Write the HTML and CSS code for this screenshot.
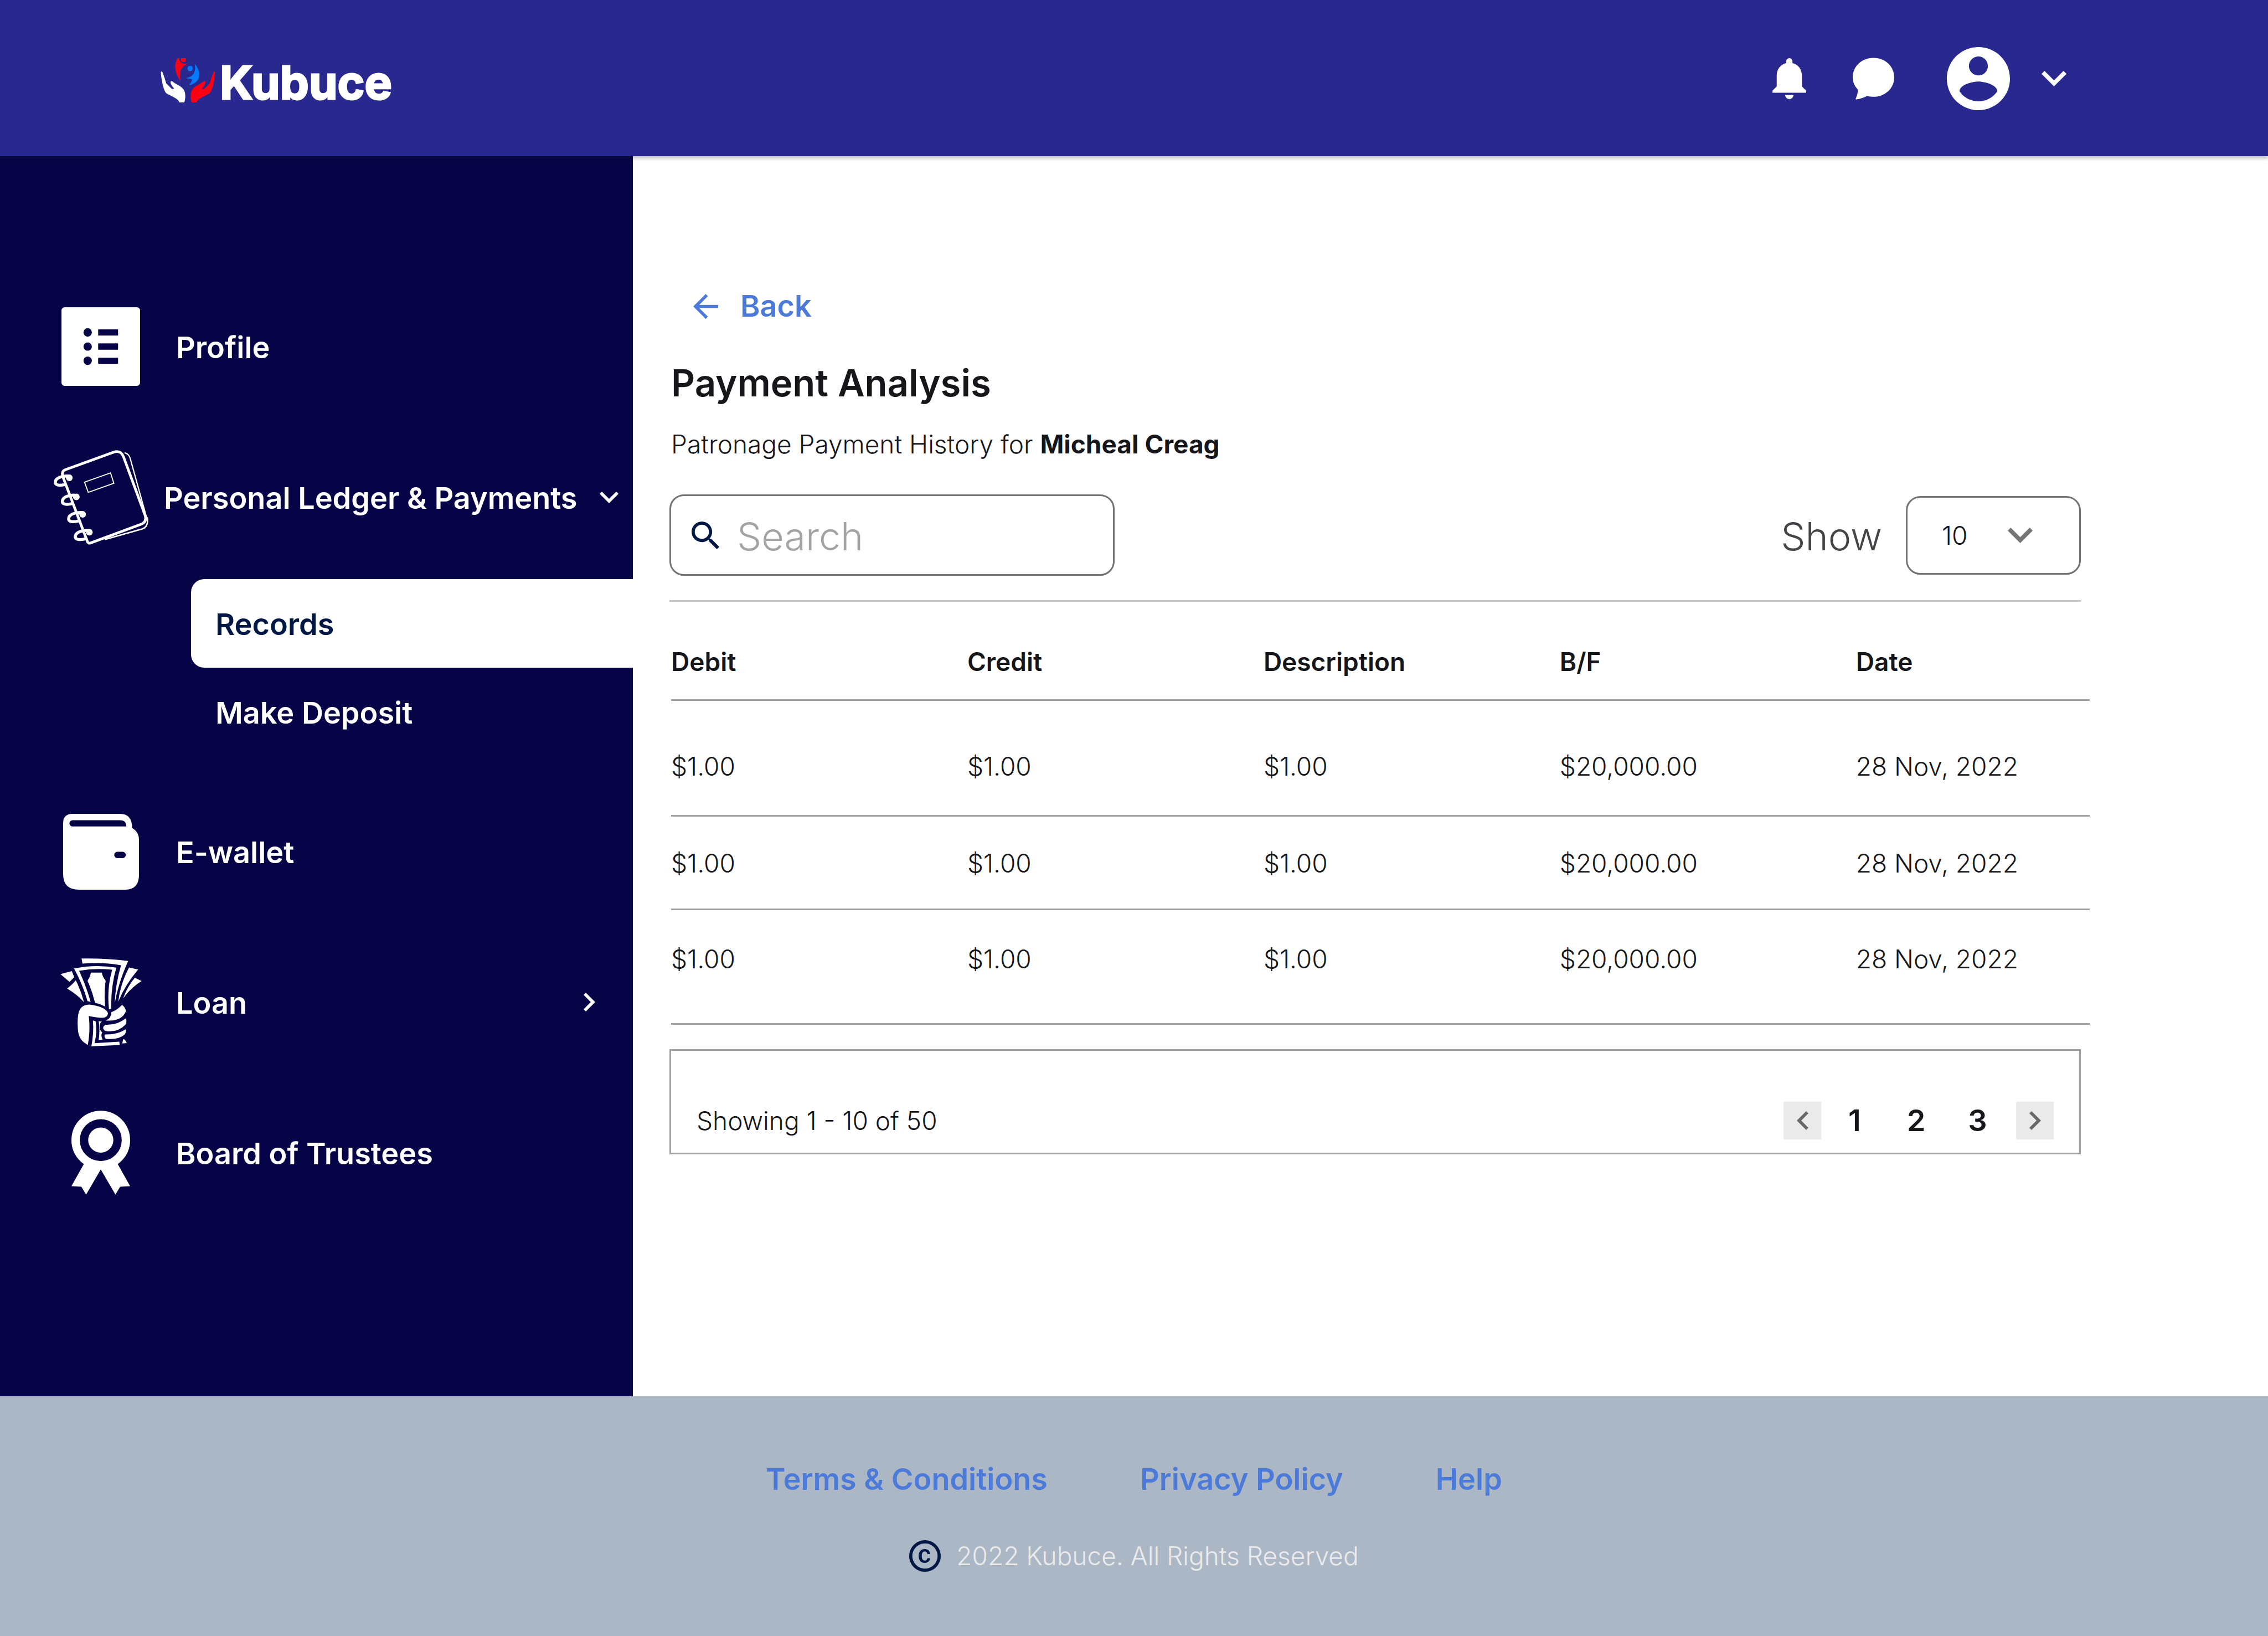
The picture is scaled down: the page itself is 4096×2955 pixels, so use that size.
FILE: index.html
```html
<!DOCTYPE html>
<html lang="en">
<head>
<meta charset="utf-8">
<title>Kubuce - Payment Analysis</title>
<meta name="viewport" content="width=device-width, initial-scale=1">
<link rel="stylesheet" href="styles.css">
</head>
<body>
<svg class="sprite" aria-hidden="true">
  <symbol id="chevron-down" viewBox="6 8.59 12 7.41"><path d="M16.59 8.59L12 13.17 7.41 8.59 6 10l6 6 6-6z"/></symbol>
  <symbol id="chevron-right" viewBox="8.59 6 7.41 12"><path d="M10 6L8.59 7.41 13.17 12l-4.58 4.59L10 18l6-6z"/></symbol>
  <symbol id="chevron-left" viewBox="8 6 7.41 12"><path d="M14 6l1.41 1.41L10.83 12l4.58 4.59L14 18l-6-6z"/></symbol>
</svg>

<header class="topbar">
  <a class="brand" href="#">
    <svg class="brand-mark" viewBox="78 93 312 252" aria-hidden="true">
      <path fill="#fff" d="M80 171c2-4 7-3 9 3 8 20 14 38 21 62l30 30c6 5 11 4 15 1-5-9-22-24-20-39 2-7 8-5 12-1 15 14 44 20 64 47 11 20 9 50 2 71h-28c-5-19-35-30-72-50-19-14-33-90-33-124z"/>
      <path fill="#fe0013" d="M388 171c-2-4-7-3-9 3-8 20-14 38-21 62l-30 30c-6 5-11 4-15 1 5-9 22-24 20-39-2-7-8-5-12-1-15 14-44 20-64 47-11 20-9 50-2 71h28c5-19 35-30 72-50 19-14 33-90 33-124z"/>
      <path fill="#fe0013" d="M175 93h10c-2 17 11 29 26 32h20c-33 16-51 38-39 101-21-36-47-84-17-133z"/>
      <circle fill="#fe0013" cx="208" cy="101" r="15"/>
      <circle fill="#047bfe" cx="246" cy="152" r="15"/>
      <path fill="#047bfe" d="M272 126c44 47 34 108-31 121 7-10 14-19 17-33-12-6-22-2-34-8 36-6 58-28 48-80z"/>
    </svg>
    <span class="brand-name">Kubuce</span>
  </a>
  <div class="topbar-actions">
    <button class="icon-button" type="button" aria-label="Notifications">
      <svg class="bell" viewBox="0 0 64 78"><path d="M26 9.500V6a6 6 0 0 1 12 0v3.500C49 12 56 21 56 34v20l8 8v4H0v-4l8-8V34C8 21 15 12 26 9.500zM24 70h16a8 8 0 0 1-16 0z"/></svg>
    </button>
    <button class="icon-button chat-button" type="button" aria-label="Messages">
      <svg class="chat" viewBox="0 0 80 80"><path d="M40 0c22 0 40 16 40 37.500S62 75 40 75c-4 0-8-.5-12-1.700C21 77 14 79 7 80c-1.500 0-1.500-1-1-2 2-5 4-10 4-17C4 55 0 47 0 37.500 0 16 18 0 40 0z"/></svg>
    </button>
    <button class="icon-button account" type="button" aria-label="Account menu">
      <svg class="avatar" viewBox="2 2 20 20"><path d="M12 2C6.480 2 2 6.480 2 12s4.480 10 10 10 10-4.480 10-10S17.520 2 12 2zm0 3c1.660 0 3 1.340 3 3s-1.340 3-3 3-3-1.340-3-3 1.340-3 3-3zm0 14.200c-2.500 0-4.710-1.280-6-3.220.03-1.990 4-3.080 6-3.080 1.990 0 5.970 1.090 6 3.080-1.290 1.940-3.500 3.220-6 3.220z"/></svg>
      <svg class="caret"><use href="#chevron-down"/></svg>
    </button>
  </div>
</header>

<div class="layout">
  <nav class="sidebar" aria-label="Main">
    <ul class="menu">
      <li>
        <a class="menu-item" href="#">
          <span class="menu-icon"><svg class="icon-profile" viewBox="0 0 150 150"><rect width="150" height="150" rx="6" fill="#fff"/><g fill="#060446"><circle cx="50" cy="48" r="8"/><circle cx="50" cy="75" r="8"/><circle cx="50" cy="102" r="8"/><rect x="70" y="42" width="38" height="12" rx="1"/><rect x="70" y="69" width="38" height="12" rx="1"/><rect x="70" y="96" width="38" height="12" rx="1"/></g></svg></span>
          <span class="menu-label">Profile</span>
        </a>
      </li>
      <li>
        <a class="menu-item ledger" href="#">
          <span class="menu-icon"><svg class="icon-ledger" viewBox="36 54 540 540">
            <path stroke-width="15" d="M229 578L88 205Q78 174 104 165L380 65Q420 54 434 92L558 428Q567 464 536 476L246 584Q233 589 228 574"/>
            <path stroke-width="7" d="M443 70Q466 76 473 104L566 440"/>
            <path stroke-width="8" d="M570 440Q578 492 540 504L330 563"/>
            <path stroke-width="6" stroke-linejoin="miter" d="M212 237L360 184L379 243L233 295z"/>
            <g id="ring"><circle cx="125" cy="212" r="19" fill="#fff" stroke="none"/><path stroke-width="17" d="M118 202C85 200 45 212 45 238C45 256 72 257 98 251"/></g>
            <use href="#ring" x="40" y="109"/><use href="#ring" x="76" y="208"/><use href="#ring" x="114" y="310"/>
          </svg></span>
          <span class="menu-label">Personal Ledger &amp; Payments</span>
          <svg class="menu-caret-down"><use href="#chevron-down"/></svg>
        </a>
        <ul class="submenu">
          <li><a class="submenu-item active" href="#" aria-current="page">Records</a></li>
          <li><a class="submenu-item" href="#">Make Deposit</a></li>
        </ul>
      </li>
      <li>
        <a class="menu-item" href="#">
          <span class="menu-icon"><svg class="icon-wallet" viewBox="0 0 144 144"><path fill-rule="evenodd" d="M18 0H108Q131 0 131 27Q144 34 144 50V116Q144 144 118 144H30Q0 144 0 114V18Q0 0 18 0zM18 12a6 6 0 0 0 0 12H120Q120 12 108 12zM103 72a6 6 0 0 0 0 12h10a6 6 0 0 0 0-12z"/></svg></span>
          <span class="menu-label">E-wallet</span>
        </a>
      </li>
      <li>
        <a class="menu-item" href="#">
          <span class="menu-icon"><svg class="icon-loan" viewBox="43 42 465 504">
            <path d="M164 43Q300 40 431 57Q375 180 354 298Q358 190 390 82Q290 62 169 72z"/>
            <path d="M436 94L488 106Q415 190 374 290Q385 190 436 94z"/>
            <path d="M469 153L508 172Q445 210 402 272Q425 205 469 153z"/>
            <path d="M43 132L108 115L122 150L95 177z"/>
            <path d="M131 168Q160 225 178 293Q140 250 81 215Q108 195 131 168z"/>
            <path d="M121 100Q240 75 363 95Q330 210 334 331L321 334Q308 215 339 107Q240 97 150 113Q190 200 216 291L198 287Q170 190 121 100z"/>
            <path d="M217 124H280Q282 145 302 170Q292 240 299 318Q270 302 241 296Q225 230 198 170Q215 145 217 124z"/>
            <path d="M205 307C260 310 315 335 315 358C310 387 280 388 205 372C212 430 210 480 200 537C160 515 143 490 142 430C140 350 150 312 205 307z"/>
            <path d="M396 308Q415 322 418 345Q395 405 302 398Q335 385 334 350Q365 340 396 308z"/>
            <path d="M417 385Q425 400 417 420Q370 470 300 457Q275 440 300 422Q370 425 417 385z"/>
            <path d="M417 448Q420 465 412 477Q375 510 303 503Q290 490 298 478Q370 480 417 448z"/>
            <path d="M229 398L244 402Q255 460 238 528L380 519L382 538L220 546Q235 470 229 398z"/>
            <path d="M262 402L280 404Q265 415 268 435Q268 455 282 465Q272 485 285 507L262 510Q270 450 262 402z"/>
            <path d="M402 505L412 508L423 527L397 529z"/>
          </svg></span>
          <span class="menu-label">Loan</span>
          <svg class="menu-caret-right"><use href="#chevron-right"/></svg>
        </a>
      </li>
      <li>
        <a class="menu-item" href="#">
          <span class="menu-icon"><svg class="icon-trustees" viewBox="0 0 112 160"><circle cx="56" cy="56" r="48" fill="none" stroke="#fff" stroke-width="16"/><circle cx="56" cy="56" r="24"/><path d="M24 101L0 144 19 145 28 160 56 112 84 160 93 145 112 144 88 101Q56 112 24 101z"/></svg></span>
          <span class="menu-label">Board of Trustees</span>
        </a>
      </li>
    </ul>
  </nav>

  <main class="content">
    <a class="back" href="#">
      <svg class="back-arrow" viewBox="4 4 16 16"><path d="M20 11H7.830l5.590-5.590L12 4l-8 8 8 8 1.410-1.410L7.830 13H20v-2z"/></svg>
      Back
    </a>
    <h1 class="title">Payment Analysis</h1>
    <p class="subtitle">Patronage Payment History for <strong>Micheal Creag</strong></p>

    <div class="toolbar">
      <label class="search">
        <svg class="search-icon" viewBox="3 3 17.490 17.490" aria-hidden="true"><path d="M15.500 14h-.79l-.28-.27C15.410 12.590 16 11.110 16 9.500 16 5.910 13.090 3 9.500 3S3 5.910 3 9.500 5.910 16 9.500 16c1.610 0 3.090-.59 4.230-1.570l.27.28v.79l5 4.990L20.490 19l-4.990-5zm-6 0C7.010 14 5 11.990 5 9.500S7.010 5 9.500 5 14 7.010 14 9.500 11.990 14 9.500 14z"/></svg>
        <input class="search-input" type="search" placeholder="Search" aria-label="Search">
      </label>
      <div class="page-size">
        <label class="page-size-label" for="page-size">Show</label>
        <div class="select">
          <select id="page-size" class="select-input"><option>10</option><option>25</option><option>50</option></select>
          <svg class="select-caret"><use href="#chevron-down"/></svg>
        </div>
      </div>
    </div>

    <table class="records">
      <colgroup><col class="col"><col class="col"><col class="col"><col class="col"><col></colgroup>
      <thead>
        <tr><th scope="col">Debit</th><th scope="col">Credit</th><th scope="col">Description</th><th scope="col">B/F</th><th scope="col">Date</th></tr>
      </thead>
      <tbody>
        <tr><td>$1.00</td><td>$1.00</td><td>$1.00</td><td>$20,000.00</td><td>28 Nov, 2022</td></tr>
        <tr><td>$1.00</td><td>$1.00</td><td>$1.00</td><td>$20,000.00</td><td>28 Nov, 2022</td></tr>
        <tr><td>$1.00</td><td>$1.00</td><td>$1.00</td><td>$20,000.00</td><td>28 Nov, 2022</td></tr>
      </tbody>
    </table>

    <div class="pagination">
      <p class="range">Showing 1 - 10 of 50</p>
      <nav class="pages" aria-label="Pages">
        <button class="step" type="button" aria-label="Previous page"><svg><use href="#chevron-left"/></svg></button>
        <a class="page" href="#">1</a>
        <a class="page" href="#">2</a>
        <a class="page" href="#">3</a>
        <button class="step" type="button" aria-label="Next page"><svg><use href="#chevron-right"/></svg></button>
      </nav>
    </div>
  </main>
</div>

<footer class="footer">
  <nav class="footer-links" aria-label="Footer">
    <a href="#">Terms &amp; Conditions</a>
    <a href="#">Privacy Policy</a>
    <a href="#">Help</a>
  </nav>
  <p class="copyright">
    <svg class="copyright-icon" viewBox="2 2 20 20" aria-hidden="true"><path d="M10.080 10.860c.05-.33.16-.62.3-.87s.34-.46.59-.62c.24-.15.54-.22.91-.23.23.01.44.05.63.13.2.09.38.21.52.36s.25.33.34.53.13.42.14.64h1.790c-.02-.47-.11-.9-.28-1.290s-.4-.73-.7-1.010-.66-.5-1.080-.66-.88-.23-1.390-.23c-.65 0-1.220.11-1.700.34s-.88.53-1.200.92-.56.84-.71 1.360S8 11.290 8 11.870v.27c0 .58.08 1.120.23 1.640s.39.97.71 1.350.72.69 1.200.91 1.050.34 1.700.34c.47 0 .91-.08 1.320-.23s.77-.36 1.080-.63.56-.58.74-.94.29-.74.3-1.150h-1.790c-.01.21-.06.4-.15.58s-.21.33-.36.46-.32.23-.52.3c-.19.07-.39.09-.6.1-.36-.01-.66-.08-.89-.23-.25-.16-.45-.37-.59-.62s-.25-.55-.3-.88-.08-.67-.08-1v-.27c0-.35.03-.68.08-1.010zM12 2C6.480 2 2 6.480 2 12s4.480 10 10 10 10-4.480 10-10S17.520 2 12 2zm0 18c-4.410 0-8-3.590-8-8s3.590-8 8-8 8 3.590 8 8-3.590 8-8 8z"/></svg>
    2022 Kubuce. All Rights Reserved
  </p>
</footer>
</body>
</html>
```
FILE: styles.css
```css
:root {
  --indigo: #29288e;
  --navy: #060446;
  --ink: #16171b;
  --deep: #001845;
  --blue: #4c7ad8;
  --line: #a0a1a4;
  --text-sm: 46px;
  --text-md: 54px;
  --text-lg: 70px;
}

*, *::before, *::after { box-sizing: border-box; }

body {
  margin: 0;
  min-height: 100vh;
  display: flex;
  flex-direction: column;
  background: #fff;
  color: var(--ink);
  font-family: "Inter", "Liberation Sans", sans-serif;
  font-size: var(--text-sm);
  font-weight: 300;
  line-height: 60px;
}

ul { list-style: none; margin: 0; padding: 0; }
h1, p { margin: 0; }
a { color: inherit; text-decoration: none; }
svg { display: block; flex: none; fill: currentColor; }
button, input, select { font: inherit; color: inherit; }
.sprite { position: absolute; width: 0; height: 0; }

/* Top bar */
.topbar {
  position: relative;
  z-index: 1;
  display: flex;
  align-items: center;
  justify-content: space-between;
  height: 282px;
  padding: 0 364px 0 290px;
  background: var(--indigo);
  color: #fff;
  box-shadow: 0 4px 6px rgba(0, 0, 0, 0.25);
}
.brand { display: flex; align-items: center; gap: 8px; padding-top: 8px; }
.brand-mark { width: 99px; height: 80px; }
.brand-name {
  padding-top: 8px;
  font-size: 83px;
  font-weight: 700;
  line-height: 96px;
  -webkit-text-stroke: 3px #fff;
  stroke-linejoin: round;
}
.topbar-actions { display: flex; align-items: center; gap: 84px; padding-top: 2px; }
.icon-button {
  display: flex;
  align-items: center;
  padding: 0;
  border: 0;
  background: none;
}
.account { gap: 57px; margin-left: 11px; }
.bell { width: 61px; height: 74px; }
.chat { width: 75px; height: 76px; }
.avatar { width: 114px; height: 114px; }
.caret { width: 45px; height: 28px; }

/* Body */
.layout { flex: 1; display: flex; }

.sidebar {
  flex: none;
  width: 1143px;
  padding: 244px 0 200px;
  background: var(--navy);
  color: #fff;
  font-size: var(--text-md);
  font-weight: 600;
  line-height: 64px;
}
.menu { display: flex; flex-direction: column; gap: 72px; }
.menu-item {
  display: flex;
  align-items: center;
  gap: 48px;
  height: 200px;
  padding: 0 68px 0 94px;
}
.menu-item.ledger { gap: 26px; padding-right: 26px; }
.menu-icon { flex: none; display: flex; justify-content: center; width: 176px; }
.menu-label { flex: 1; padding-top: 4px; white-space: nowrap; }
.menu-caret-down { width: 34px; height: 21px; }
.menu-caret-right { width: 21px; height: 34px; }
.icon-profile { width: 142px; height: 142px; }
.icon-ledger {
  width: 171px;
  height: 171px;
  fill: none;
  stroke: #fff;
  stroke-linejoin: round;
  stroke-linecap: round;
}
.icon-wallet { width: 137px; height: 137px; }
.icon-loan { width: 147px; height: 159px; }
.icon-trustees { width: 106px; height: 152px; }
.submenu { margin: 48px 0 0 345px; }
.submenu-item {
  display: flex;
  align-items: center;
  height: 160px;
  padding: 4px 0 0 44px;
  border-radius: 24px 0 0 24px;
}
.submenu-item.active { background: #fff; color: var(--deep); }

.content { flex: 1; min-width: 0; padding: 239px 322px 80px 66px; }
.back {
  display: flex;
  align-items: center;
  gap: 40px;
  width: max-content;
  margin-left: 43px;
  color: var(--blue);
  font-size: var(--text-md);
  font-weight: 600;
  line-height: 64px;
}
.back-arrow { width: 45px; height: 45px; }
.title {
  margin: 63px 0 0 3px;
  font-size: 67px;
  font-weight: 600;
  line-height: 88px;
}
.subtitle { margin: 36px 0 0 3px; }
.subtitle strong { font-weight: 700; }

.toolbar {
  display: flex;
  align-items: center;
  justify-content: space-between;
  margin: 61px 16px 0 0;
  padding-bottom: 44px;
  border-bottom: 3px solid #c8c8c8;
}
.search {
  display: flex;
  align-items: center;
  gap: 32px;
  width: 804px;
  height: 147px;
  padding: 0 37px;
  border: 3px solid #747474;
  border-radius: 26px;
}
.search-icon { width: 50px; height: 50px; color: var(--deep); }
.search-input {
  flex: 1;
  min-width: 0;
  padding: 4px 0 0;
  border: 0;
  outline: 0;
  background: none;
  font-size: var(--text-lg);
  line-height: 88px;
}
.search-input::placeholder { color: #a2a3a4; opacity: 1; }
.page-size { display: flex; align-items: center; gap: 43px; }
.page-size-label { padding-top: 4px; color: #444548; font-size: var(--text-lg); line-height: 88px; }
.select { position: relative; width: 316px; }
.select-input {
  width: 100%;
  height: 142px;
  padding: 0 62px;
  border: 3px solid #747474;
  border-radius: 26px;
  background: #fff;
  appearance: none;
}
.select-caret {
  position: absolute;
  top: 57px;
  right: 87px;
  width: 45px;
  height: 28px;
  color: #747678;
  pointer-events: none;
}

.records {
  width: calc(100% - 3px);
  margin-left: 3px;
  border-collapse: separate;
  border-spacing: 0;
  table-layout: fixed;
}
.col { width: 20.880%; }
.records th, .records td {
  padding: 54px 0 52px;
  border-bottom: 3px solid var(--line);
  text-align: left;
  white-space: nowrap;
}
.records th { padding: 78px 0 38px; font-weight: 600; }
.records tbody tr:first-child td { padding: 88px 0 58px; }
.records tbody tr:last-child td { padding: 58px 0 86px; }

.pagination {
  display: flex;
  align-items: center;
  justify-content: space-between;
  margin: 44px 16px 0 0;
  padding: 92px 46px 24px 46px;
  border: 3px solid var(--line);
}
.pages { display: flex; align-items: center; }
.step {
  display: flex;
  align-items: center;
  justify-content: center;
  width: 68px;
  height: 68px;
  margin: 0 5px 0 0;
  padding: 0;
  border: 0;
  background: #eaeaea;
  color: #686868;
}
.step:last-child { margin: 0 0 0 14px; }
.step svg { width: 21px; height: 34px; }
.page {
  width: 111px;
  text-align: center;
  font-size: var(--text-md);
  font-weight: 600;
}

/* Footer */
.footer {
  display: flex;
  flex-direction: column;
  align-items: center;
  gap: 76px;
  padding: 118px 0 115px;
  background: #acb7c6;
}
.footer-links {
  display: flex;
  gap: 167px;
  color: var(--blue);
  font-size: var(--text-md);
  font-weight: 600;
  line-height: 64px;
}
.copyright { display: flex; align-items: center; gap: 28px; color: #ebebeb; }
.copyright-icon { width: 57px; height: 57px; color: var(--deep); }
```
